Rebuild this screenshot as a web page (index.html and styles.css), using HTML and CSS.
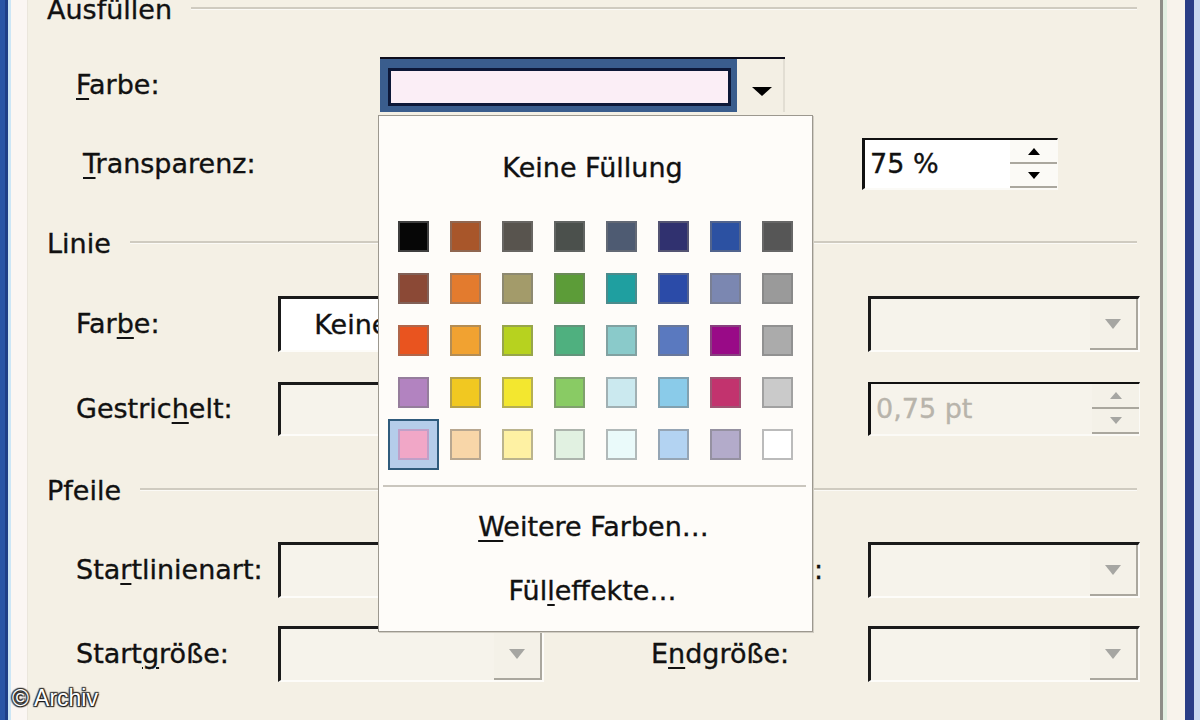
FILE: index.html
```html
<!DOCTYPE html>
<html lang="de">
<head>
<meta charset="utf-8">
<title>AutoForm formatieren – Farben und Linien</title>
<link rel="stylesheet" href="styles.css">
</head>
<body>
<div class="window">
  <div class="frame-left"></div>
  <main class="panel">
    <div class="section-head head-fill"><span>Ausfüllen</span><i class="rule"></i></div>

    <div class="row row-fillcolor">
      <label class="lbl lbl-fill"><u>F</u>arbe:</label>
      <div class="fill-combo">
        <div class="fill-field"><div class="fill-swatch"></div></div>
        <div class="fill-btn"><svg width="20" height="9" viewBox="0 0 20 9"><path d="M0 0H20L10 9Z" fill="#000"/></svg></div>
      </div>
    </div>

    <div class="row row-transp">
      <label class="lbl lbl-transp"><u>T</u>ransparenz:</label>
      <div class="spin spin-transp">
        <span class="spin-text">75 %</span>
        <div class="spin-btns">
          <span class="spin-b"><svg width="12" height="7" viewBox="0 0 12 7"><path d="M0 7H12L6 0Z" fill="#000"/></svg></span>
          <span class="spin-b"><svg width="12" height="7" viewBox="0 0 12 7"><path d="M0 0H12L6 7Z" fill="#000"/></svg></span>
        </div>
      </div>
    </div>

    <div class="section-head head-line"><span>Linie</span><i class="rule"></i></div>

    <div class="row row-linecolor">
      <label class="lbl lbl-left">Far<u>b</u>e:</label>
      <div class="combo combo-left combo-white">
        <div class="field">Keine Linie</div>
        <div class="btn"><svg width="16" height="10" viewBox="0 0 16 10"><path d="M0 0H16L8 10Z" fill="#000"/></svg></div>
      </div>
      <label class="lbl lbl-right">Art:</label>
      <div class="combo combo-right">
        <div class="field"></div>
        <div class="btn"><svg width="16" height="10" viewBox="0 0 16 10"><path d="M0 0H16L8 10Z" fill="#a6a6a2"/></svg></div>
      </div>
    </div>

    <div class="row row-dash">
      <label class="lbl lbl-left">Gestric<u>h</u>elt:</label>
      <div class="combo combo-left">
        <div class="field"></div>
        <div class="btn"><svg width="16" height="10" viewBox="0 0 16 10"><path d="M0 0H16L8 10Z" fill="#a6a6a2"/></svg></div>
      </div>
      <label class="lbl lbl-right">Stärke:</label>
      <div class="spin spin-weight">
        <span class="spin-text">0,75 pt</span>
        <div class="spin-btns">
          <span class="spin-b"><svg width="12" height="7" viewBox="0 0 12 7"><path d="M0 7H12L6 0Z" fill="#a6a6a2"/></svg></span>
          <span class="spin-b"><svg width="12" height="7" viewBox="0 0 12 7"><path d="M0 0H12L6 7Z" fill="#a6a6a2"/></svg></span>
        </div>
      </div>
    </div>

    <div class="section-head head-arrow"><span>Pfeile</span><i class="rule"></i></div>

    <div class="row row-start">
      <label class="lbl lbl-left">Sta<u>r</u>tlinienart:</label>
      <div class="combo combo-left">
        <div class="field"></div>
        <div class="btn"><svg width="16" height="10" viewBox="0 0 16 10"><path d="M0 0H16L8 10Z" fill="#a6a6a2"/></svg></div>
      </div>
      <label class="lbl lbl-right">Endlinienart:</label>
      <div class="combo combo-right">
        <div class="field"></div>
        <div class="btn"><svg width="16" height="10" viewBox="0 0 16 10"><path d="M0 0H16L8 10Z" fill="#a6a6a2"/></svg></div>
      </div>
    </div>

    <div class="row row-size">
      <label class="lbl lbl-left">Start<u>g</u>röße:</label>
      <div class="combo combo-left">
        <div class="field"></div>
        <div class="btn"><svg width="16" height="10" viewBox="0 0 16 10"><path d="M0 0H16L8 10Z" fill="#a6a6a2"/></svg></div>
      </div>
      <label class="lbl lbl-right">E<u>n</u>dgröße:</label>
      <div class="combo combo-right">
        <div class="field"></div>
        <div class="btn"><svg width="16" height="10" viewBox="0 0 16 10"><path d="M0 0H16L8 10Z" fill="#a6a6a2"/></svg></div>
      </div>
    </div>
  </main>
  <div class="frame-right"></div>

  <div class="popup">
    <div class="pop-item pop-title">Keine Füllung</div>
    <div class="palette">
      <span class="sw" style="background:#060606"></span>
      <span class="sw" style="background:#a8562a"></span>
      <span class="sw" style="background:#58544e"></span>
      <span class="sw" style="background:#4b504c"></span>
      <span class="sw" style="background:#4e5b72"></span>
      <span class="sw" style="background:#30316f"></span>
      <span class="sw" style="background:#2c51a2"></span>
      <span class="sw" style="background:#565656"></span>

      <span class="sw" style="background:#8b4936"></span>
      <span class="sw" style="background:#e37b2e"></span>
      <span class="sw" style="background:#a39b6a"></span>
      <span class="sw" style="background:#5c9c38"></span>
      <span class="sw" style="background:#1f9fa0"></span>
      <span class="sw" style="background:#2b4ba8"></span>
      <span class="sw" style="background:#7b87b1"></span>
      <span class="sw" style="background:#9a9a9a"></span>

      <span class="sw" style="background:#e9541f"></span>
      <span class="sw" style="background:#f1a231"></span>
      <span class="sw" style="background:#b7d21f"></span>
      <span class="sw" style="background:#4fb07f"></span>
      <span class="sw" style="background:#8acaca"></span>
      <span class="sw" style="background:#5a79bf"></span>
      <span class="sw" style="background:#990a87"></span>
      <span class="sw" style="background:#ababab"></span>

      <span class="sw" style="background:#b283c0"></span>
      <span class="sw" style="background:#f1c821"></span>
      <span class="sw" style="background:#f3e72f"></span>
      <span class="sw" style="background:#89cb64"></span>
      <span class="sw" style="background:#cbe9ef"></span>
      <span class="sw" style="background:#8acbe9"></span>
      <span class="sw" style="background:#c2336e"></span>
      <span class="sw" style="background:#cacaca"></span>

      <span class="sw sw-selected" style="background:#f1a7c7"></span>
      <span class="sw" style="background:#f8d6a8"></span>
      <span class="sw" style="background:#fef1a3"></span>
      <span class="sw" style="background:#e1f1e1"></span>
      <span class="sw" style="background:#eafafa"></span>
      <span class="sw" style="background:#b3d3f2"></span>
      <span class="sw" style="background:#b3abca"></span>
      <span class="sw" style="background:#ffffff"></span>
    </div>
    <div class="pop-sep"></div>
    <div class="pop-item pop-more"><u>W</u>eitere Farben…</div>
    <div class="pop-item pop-effects">Fül<u>l</u>effekte…</div>
  </div>

  <div class="watermark">© Archiv</div>
</div>
</body>
</html>
```

FILE: styles.css
```css
html, body {
  margin: 0;
  padding: 0;
}

body {
  width: 1200px;
  height: 720px;
  overflow: hidden;
  font-family: "DejaVu Sans", Verdana, sans-serif;
  font-size: 27px;
  color: #111;
  background: #f4f0e5;
  -webkit-text-stroke: 0.35px currentColor;
}

u {
  text-decoration: underline;
  text-decoration-thickness: 2px;
  text-underline-offset: 4px;
}

.window {
  position: relative;
  display: flex;
  width: 1200px;
  height: 720px;
}

.frame-left {
  flex: none;
  width: 28px;
  background: linear-gradient(to right,
    #2a55a6 0 5px, #1f3f88 5px 8px, #cde6f6 8px 11px,
    #fbf6f3 11px 27px, #ebe6dc 27px 28px);
}

.frame-right {
  flex: none;
  width: 40px;
  background: linear-gradient(to right,
    #8e8e88 0 3px, #e2efe2 3px 7px, #f8f3ec 7px 25px,
    #2a3d86 25px 34px, #c9d8ef 34px 40px);
}

.panel {
  flex: 1;
  display: flex;
  flex-direction: column;
  padding: 0 20px 0 19px;
  background: #f4f0e5;
}

/* section headers */
.section-head {
  flex: none;
  display: flex;
  align-items: center;
  height: 20px;
  line-height: 20px;
  gap: 19px;
  white-space: nowrap;
}

.rule {
  flex: 1;
  height: 0;
  margin-right: 3px;
  margin-top: -3px;
  border-top: 2px solid #cfcbc0;
  border-bottom: 1px solid #fbfaf6;
}

.head-line { margin-top: 44px; }
.head-arrow { margin-top: 45px; }

/* rows */
.row {
  flex: none;
  display: flex;
  align-items: center;
}

.lbl {
  flex: none;
  line-height: 32px;
  white-space: nowrap;
}

.row-fillcolor { margin-top: 37px; height: 55px; }
.row-transp    { margin-top: 26px; height: 52px; }
.row-linecolor { margin-top: 42px; height: 56px; }
.row-dash      { margin-top: 30px; height: 54px; }
.row-start     { margin-top: 41px; height: 56px; }
.row-size      { margin-top: 28px; height: 56px; }

.lbl-fill   { margin-left: 29px; width: 304px; }
.lbl-transp { margin-left: 36px; width: 779px; }
.lbl-left   { margin-left: 29px; width: 202px; }
.lbl-right  { margin-left: 107px; width: 217px; }

/* fill colour combo (focused) */
.fill-combo {
  flex: none;
  box-sizing: border-box;
  display: flex;
  width: 405px;
  height: 55px;
  border-top: 2px solid #0e0e1c;
}

.fill-field {
  flex: 1;
  box-sizing: border-box;
  padding: 9px 6px 6px 8px;
  background: #3a5d8d;
}

.fill-swatch {
  box-sizing: border-box;
  height: 100%;
  border: 3px solid #0d1838;
  background: #fbeef6;
}

.fill-btn {
  flex: none;
  box-sizing: border-box;
  width: 48px;
  display: flex;
  justify-content: center;
  align-items: flex-start;
  padding-top: 28px;
  padding-left: 4px;
  background: #f3efe4;
  border-right: 2px solid #e2ded3;
}

/* combos */
.combo {
  flex: none;
  box-sizing: border-box;
  display: flex;
  height: 100%;
  border-top: 3px solid #1a1a1a;
  border-left: 3px solid #1a1a1a;
  border-right: 2px solid #fdfcf9;
  border-bottom: 2px solid #fdfcf9;
  background: #f6f3eb;
}

.combo-left  { width: 266px; }
.combo-right { width: 272px; }
.combo-white { background: #ffffff; }

.field {
  flex: 1;
  display: flex;
  align-items: center;
  justify-content: center;
  white-space: nowrap;
  overflow: hidden;
  line-height: 32px;
}

.btn {
  flex: none;
  box-sizing: border-box;
  width: 48px;
  display: flex;
  align-items: center;
  justify-content: center;
  background: #f4f1e8;
  border-right: 2px solid #aaa79e;
  border-bottom: 2px solid #aaa79e;
}

/* spin boxes */
.spin {
  flex: none;
  box-sizing: border-box;
  display: flex;
  height: 100%;
  border-top: 2px solid #111;
  border-left: 3px solid #111;
  border-right: 1px solid #fbfaf6;
  border-bottom: 2px solid #fbfaf6;
  background: #ffffff;
}

.spin-transp { width: 196px; }
.spin-weight { width: 272px; background: #f6f3eb; color: #b8b4ab; }

.spin-text {
  flex: 1;
  align-self: center;
  line-height: 32px;
  padding-left: 5px;
  white-space: nowrap;
}

.spin-btns {
  flex: none;
  width: 47px;
  display: flex;
  flex-direction: column;
}

.spin-b {
  flex: 1;
  display: flex;
  align-items: center;
  justify-content: center;
  background: #fbfaf6;
  border-bottom: 2px solid #aaa79e;
}

.spin-weight .spin-b { background: #f4f1e8; }

/* popup */
.popup {
  position: absolute;
  left: 378px;
  top: 115px;
  box-sizing: border-box;
  width: 435px;
  height: 517px;
  padding: 36px 19px 0 19px;
  display: flex;
  flex-direction: column;
  align-items: center;
  border: 1px solid #9c988f;
  background: #fefcf9;
  box-shadow: 1px 1px 0 #d2cec4;
}

.pop-item {
  flex: none;
  line-height: 32px;
  white-space: nowrap;
}

.pop-title { margin-right: 6px; }

.palette {
  flex: none;
  margin-top: 37px;
  display: grid;
  grid-template-columns: repeat(8, 31px);
  grid-auto-rows: 31px;
  gap: 21px;
}

.sw {
  display: block;
  box-sizing: border-box;
  border: 2px solid rgba(120, 120, 120, 0.5);
}

.sw-selected {
  border-color: #c0a0c8;
  box-shadow: 0 0 0 8px #b5cdea, 0 0 0 10px #2f5b7c;
}

.pop-sep {
  flex: none;
  align-self: stretch;
  margin: 25px -13px 0 -15px;
  height: 0;
  border-top: 2px solid #cac6be;
}

.pop-more { margin-top: 24px; margin-right: 4px; }
.pop-effects { margin-top: 32px; margin-right: 6px; }

/* watermark */
.watermark {
  position: absolute;
  left: 12px;
  top: 685px;
  font-family: "Liberation Sans", Arial, sans-serif;
  font-size: 23px;
  line-height: 26px;
  color: #ffffff;
  -webkit-text-stroke: 0;
  text-shadow: 0 0 2px #222, 1px 1px 1px #111, -1px -1px 1px #333, 1px -1px 1px #333, -1px 1px 1px #333;
}
```
